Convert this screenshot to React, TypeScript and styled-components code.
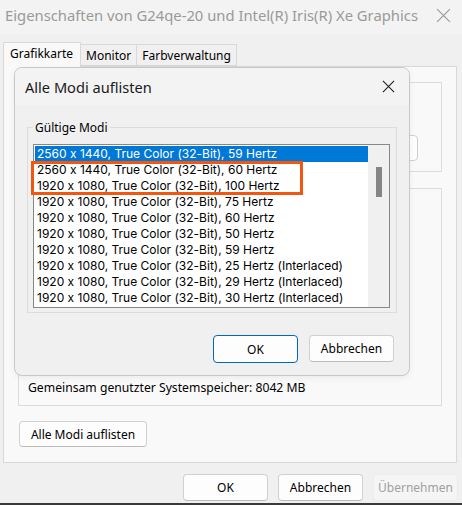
import React from 'react';
import styled, { createGlobalStyle } from 'styled-components';

const GlobalStyle = createGlobalStyle`
  html, body {
    margin: 0;
    padding: 0;
    background: #f0f0f0;
  }
  body {
    font-family: 'Noto Sans', 'Open Sans', sans-serif;
    color: #000;
  }
`;

const modes = [
  '2560 x 1440, True Color (32-Bit), 59 Hertz',
  '2560 x 1440, True Color (32-Bit), 60 Hertz',
  '1920 x 1080, True Color (32-Bit), 100 Hertz',
  '1920 x 1080, True Color (32-Bit), 75 Hertz',
  '1920 x 1080, True Color (32-Bit), 60 Hertz',
  '1920 x 1080, True Color (32-Bit), 50 Hertz',
  '1920 x 1080, True Color (32-Bit), 59 Hertz',
  '1920 x 1080, True Color (32-Bit), 25 Hertz (Interlaced)',
  '1920 x 1080, True Color (32-Bit), 29 Hertz (Interlaced)',
  '1920 x 1080, True Color (32-Bit), 30 Hertz (Interlaced)',
];

const tabs = ['Grafikkarte', 'Monitor', 'Farbverwaltung'];

const CloseIcon = ({ size = 14 }: { size?: number }) => (
  <svg width={size} height={size} viewBox="0 0 14 14">
    <path d="M1 1 L13 13 M13 1 L1 13" stroke="currentColor" strokeWidth="1.1" fill="none" />
  </svg>
);

const App = () => (
  <>
    <GlobalStyle />
    <Window>
      <TitleBar>
        <TitleText>Eigenschaften von G24qe-20 und Intel(R) Iris(R) Xe Graphics</TitleText>
        <TitleClose>
          <CloseIcon size={15} />
        </TitleClose>
      </TitleBar>

      <TabStrip>
        {tabs.map((t, i) => (
          <Tab key={t} $active={i === 0}>
            {t}
          </Tab>
        ))}
      </TabStrip>

      <TabPanel>
        <GroupBox $height={90}>
          <HiddenButton />
        </GroupBox>
        <GroupBox $height={218}>
          <MemoryText>Gemeinsam genutzter Systemspeicher: 8042 MB</MemoryText>
        </GroupBox>
        <PanelButton>Alle Modi auflisten</PanelButton>
      </TabPanel>

      <Footer>
        <Button>OK</Button>
        <Button>Abbrechen</Button>
        <Button $disabled>Übernehmen</Button>
      </Footer>

      <Dialog>
        <DialogTitleBar>
          <DialogTitle>Alle Modi auflisten</DialogTitle>
          <DialogClose>
            <CloseIcon size={13} />
          </DialogClose>
        </DialogTitleBar>
        <DialogBody>
          <ModesGroup>
            <Legend>Gültige Modi</Legend>
            <ListBox>
              <Rows>
                {modes.map((m, i) => (
                  <Row key={i} $selected={i === 0}>
                    {m}
                  </Row>
                ))}
              </Rows>
              <ScrollTrack>
                <ScrollThumb />
              </ScrollTrack>
              <Highlight />
            </ListBox>
          </ModesGroup>
          <DialogButtons>
            <Button $default>OK</Button>
            <Button>Abbrechen</Button>
          </DialogButtons>
        </DialogBody>
      </Dialog>
    </Window>
  </>
);

const Window = styled.div`
  position: relative;
  width: 462px;
  height: 505px;
  box-sizing: border-box;
  background: #f0f0f0;
  border-bottom: 2px solid #3a3a3a;
  display: flex;
  flex-direction: column;
  overflow: hidden;
`;

const TitleBar = styled.div`
  height: 30px;
  flex: none;
  display: flex;
  align-items: center;
  justify-content: space-between;
  padding: 0 10px 4px 5px;
  background: #f3f3f3;
`;

const TitleText = styled.span`
  font-size: 14.8px;
  color: #9a9a9a;
  white-space: nowrap;
`;

const TitleClose = styled.span`
  color: #9a9a9a;
  display: flex;
  margin-right: 1px;
`;

const TabStrip = styled.div`
  display: flex;
  align-items: flex-end;
  height: 24px;
  margin: 8px 0 0 3px;
  position: relative;
  z-index: 1;
`;

const Tab = styled.div<{ $active?: boolean }>`
  box-sizing: border-box;
  height: ${(p) => (p.$active ? '25px' : '22px')};
  padding: ${(p) => (p.$active ? '0 7px 4px 6px' : '0 5px')};
  display: flex;
  align-items: center;
  font-size: 12px;
  border: 1px solid #d9d9d9;
  border-bottom: ${(p) => (p.$active ? 'none' : '1px solid #d9d9d9')};
  border-left: ${(p) => (p.$active ? '1px solid #d9d9d9' : 'none')};
  background: ${(p) => (p.$active ? '#f9f9f9' : '#f0f0f0')};
  margin-bottom: ${(p) => (p.$active ? '-1px' : '0')};
`;

const TabPanel = styled.div`
  box-sizing: border-box;
  height: 397px;
  margin: 0 5px 0 3px;
  border: 1px solid #d9d9d9;
  background: #f9f9f9;
  padding: 15px 14px 0 14px;
  display: flex;
  flex-direction: column;
  gap: 16px;
`;

const GroupBox = styled.div<{ $height: number }>`
  box-sizing: border-box;
  height: ${(p) => p.$height}px;
  border: 1px solid #dcdcdc;
  display: flex;
  flex-direction: column;
  justify-content: flex-end;
  align-items: flex-end;
  padding: 0 0 9px 9px;
  &:first-child {
    justify-content: flex-start;
    padding: 52px 23px 0 0;
  }
`;

const HiddenButton = styled.div`
  width: 80px;
  height: 26px;
  box-sizing: border-box;
  border: 1px solid #d0d0d0;
  border-radius: 4px;
  background: #fdfdfd;
`;

const MemoryText = styled.div`
  align-self: flex-start;
  font-size: 12.2px;
`;

const Button = styled.div<{ $default?: boolean; $disabled?: boolean }>`
  box-sizing: border-box;
  width: 85px;
  height: ${(p) => (p.$default ? '28px' : '27px')};
  display: flex;
  align-items: center;
  justify-content: center;
  font-size: 12px;
  white-space: nowrap;
  border-radius: 4px;
  background: ${(p) => (p.$disabled ? '#f5f5f5' : '#fdfdfd')};
  color: ${(p) => (p.$disabled ? '#a0a0a0' : '#000')};
  border: 1px solid
    ${(p) => (p.$default ? '#0067c0' : p.$disabled ? '#ececec' : '#d0d0d0')};
  border-bottom-color: ${(p) => (p.$default ? '#0067c0' : p.$disabled ? '#ececec' : '#bcbcbc')};
`;

const PanelButton = styled(Button)`
  width: 128px;
  height: 26px;
  margin: -1px 0 0 1px;
`;

const Footer = styled.div`
  flex: 1;
  display: flex;
  justify-content: flex-end;
  align-items: flex-start;
  gap: 10px;
  padding: 11px 4px 0 0;
`;

const Dialog = styled.div`
  position: absolute;
  left: 14px;
  top: 67px;
  width: 396px;
  height: 309px;
  box-sizing: border-box;
  border: 1px solid #c8c8c8;
  border-radius: 8px;
  background: #f0f0f0;
  overflow: hidden;
  display: flex;
  flex-direction: column;
  z-index: 2;
  box-shadow: 0 2px 6px rgba(0, 0, 0, 0.06);
`;

const DialogTitleBar = styled.div`
  height: 37px;
  flex: none;
  background: #f3f3f3;
  display: flex;
  align-items: center;
  justify-content: space-between;
  padding: 0 14px 0 10px;
`;

const DialogTitle = styled.span`
  font-size: 14.6px;
  color: #1a1a1a;
`;

const DialogClose = styled.span`
  display: flex;
  color: #1a1a1a;
`;

const DialogBody = styled.div`
  flex: 1;
  padding: 22px 12px 0 12px;
  display: flex;
  flex-direction: column;
`;

const ModesGroup = styled.div`
  position: relative;
  box-sizing: border-box;
  height: 186px;
  width: 370px;
  border: 1px solid #dcdcdc;
  padding: 16px 6px 5px 5px;
`;

const Legend = styled.span`
  position: absolute;
  top: -9px;
  left: 5px;
  padding: 0 2px;
  font-size: 12px;
  background: #f0f0f0;
`;

const ListBox = styled.div`
  position: relative;
  box-sizing: border-box;
  height: 164px;
  border: 1px solid #828790;
  background: #fff;
  display: flex;
  padding: 1px 0 1px 1px;
`;

const Rows = styled.div`
  flex: 1;
  display: flex;
  flex-direction: column;
  overflow: hidden;
`;

const Row = styled.div<{ $selected?: boolean }>`
  height: 16px;
  line-height: 16px;
  padding-left: 2px;
  font-family: Inter, 'Noto Sans', sans-serif;
  font-feature-settings: 'calt' 0;
  font-size: 12px;
  white-space: nowrap;
  background: ${(p) => (p.$selected ? '#0078d7' : 'transparent')};
  color: ${(p) => (p.$selected ? '#fff' : '#000')};
`;

const ScrollTrack = styled.div`
  width: 21px;
  flex: none;
  margin: -1px 0 -1px 0;
  background: #f0f0f0;
  display: flex;
  justify-content: center;
  padding-top: 22px;
`;

const ScrollThumb = styled.div`
  width: 6px;
  height: 30px;
  background: #858585;
  margin-left: 1px;
`;

const Highlight = styled.div`
  position: absolute;
  left: -3px;
  top: 16px;
  width: 272px;
  height: 34px;
  box-sizing: border-box;
  border: 3px solid #f3570f;
  pointer-events: none;
`;

const DialogButtons = styled.div`
  display: flex;
  justify-content: flex-end;
  gap: 11px;
  padding: 22px 3px 0 0;
`;

export default App;
